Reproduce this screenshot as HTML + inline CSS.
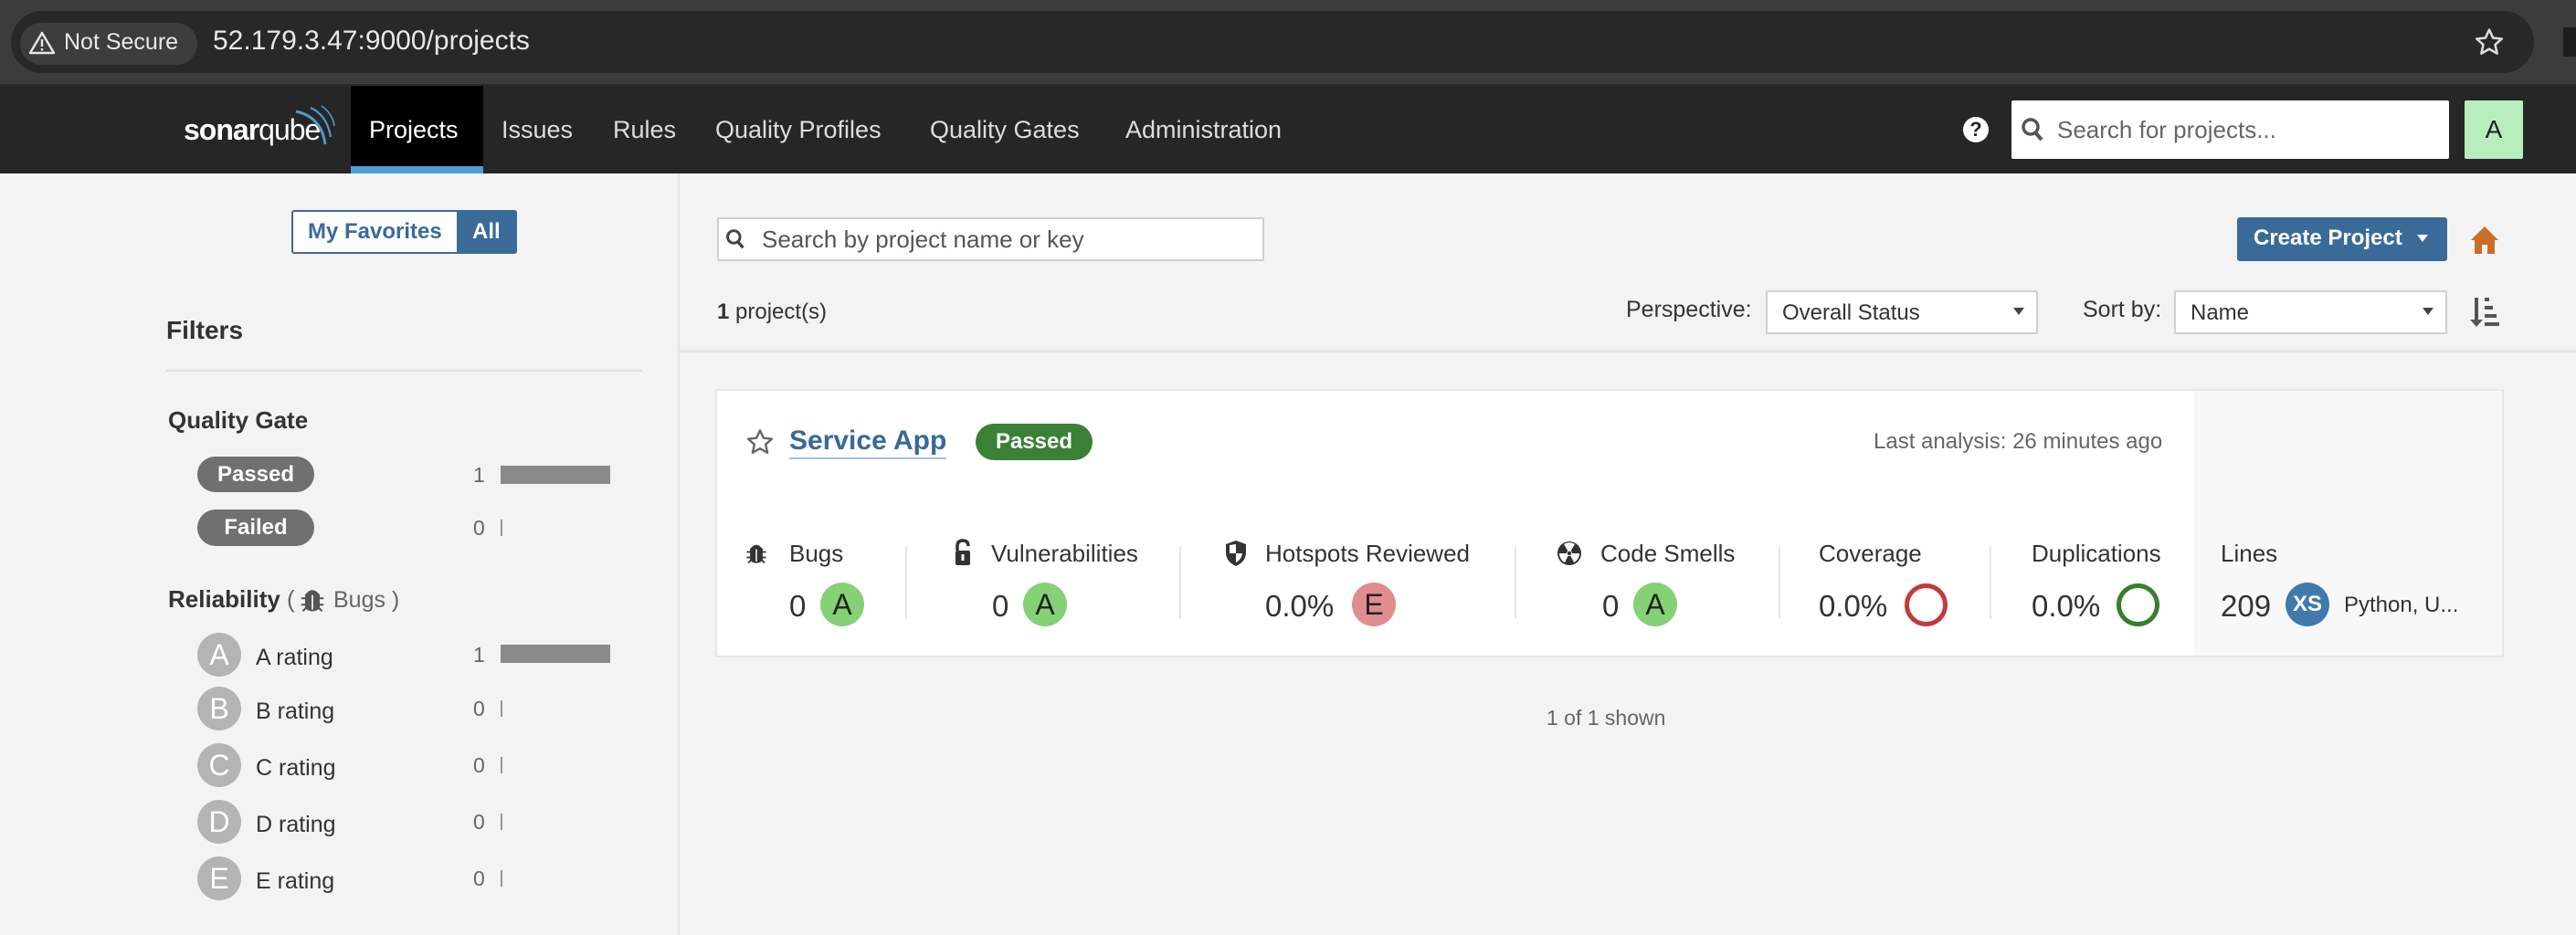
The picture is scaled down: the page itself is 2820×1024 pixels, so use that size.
<!DOCTYPE html>
<html><head><meta charset="utf-8"><style>
*{margin:0;padding:0;box-sizing:border-box}
body{width:2820px;height:1024px;overflow:hidden;background:#f3f3f3;font-family:"Liberation Sans",Arial,sans-serif;position:relative;color:#333}
.a{position:absolute}
.t{position:absolute;white-space:nowrap;line-height:1}
.nav{font-size:27px;color:#ddd}
.rc{position:absolute;width:48px;height:48px;border-radius:50%;background:#b4b4b4;color:#fff;font-size:32px;text-align:center;line-height:48px}
.lbl{font-size:25px;color:#333}
.cnt{font-size:23px;color:#666}
.ml{font-size:26px;color:#333}
.mv{font-size:33px;color:#333}
.rg{position:absolute;width:48px;height:48px;border-radius:50%;font-size:32px;text-align:center;line-height:48px;color:#222;top:638px}
.div{position:absolute;top:598px;width:2px;height:80px;background:#e6e6e6}
</style></head><body>
<!-- browser bar -->
<div class="a" style="left:0;top:0;width:2820px;height:92px;background:#3c3c3c"></div>
<div class="a" style="left:0;top:92px;width:2820px;height:2px;background:#2a2a2a"></div>
<div class="a" style="left:12px;top:12px;width:2762px;height:68px;border-radius:34px;background:#282828"></div>
<div class="a" style="left:22px;top:25px;width:194px;height:46px;border-radius:23px;background:#3d3d3d"></div>
<svg class="a" style="left:31px;top:33px" width="30" height="28" viewBox="0 0 30 28"><path d="M15 3 L28 25 H2 Z" fill="none" stroke="#e8e8e8" stroke-width="2.4" stroke-linejoin="round"/><rect x="13.8" y="10" width="2.4" height="8" fill="#e8e8e8"/><rect x="13.8" y="20" width="2.4" height="2.4" fill="#e8e8e8"/></svg>
<div class="t" style="left:70px;top:34px;font-size:25px;color:#e8e8e8">Not Secure</div>
<div class="t" style="left:233px;top:30px;font-size:30px;color:#e8e8e8">52.179.3.47:9000/projects</div>
<svg class="a" style="left:2708px;top:29px" width="34" height="34" viewBox="0 0 24 24"><path d="M12 2.5l2.9 6.3 6.8.7-5.1 4.6 1.5 6.8L12 17.4 5.9 20.9l1.5-6.8-5.1-4.6 6.8-.7z" fill="none" stroke="#ddd" stroke-width="1.8" stroke-linejoin="round"/></svg>
<div class="a" style="left:2806px;top:30px;width:14px;height:32px;background:#1d1d1d"></div>
<!-- nav -->
<div class="a" style="left:0;top:94px;width:2820px;height:96px;background:#262626"></div>
<div class="t" style="left:201px;top:126px;font-size:32px;color:#fff;letter-spacing:-1px"><b>sonar</b>qube</div>
<svg class="a" style="left:322px;top:114px" width="46" height="46" viewBox="0 0 46 46"><path d="M2 8 Q30 14 34 44" fill="none" stroke="#4e9bcd" stroke-width="3"/><path d="M18 4 Q36 12 40 36" fill="none" stroke="#4e9bcd" stroke-width="2.2"/><path d="M30 2 Q42 10 44 24" fill="none" stroke="#4e9bcd" stroke-width="1.6"/></svg>
<div class="a" style="left:384px;top:94px;width:145px;height:96px;background:#000"></div>
<div class="a" style="left:384px;top:182px;width:145px;height:8px;background:#4b9fd5"></div>
<div class="t nav" style="left:404px;top:129px;color:#fff">Projects</div>
<div class="t nav" style="left:549px;top:129px">Issues</div>
<div class="t nav" style="left:671px;top:129px">Rules</div>
<div class="t nav" style="left:783px;top:129px">Quality Profiles</div>
<div class="t nav" style="left:1018px;top:129px">Quality Gates</div>
<div class="t nav" style="left:1232px;top:129px">Administration</div>
<div class="a" style="left:2149px;top:128px;width:28px;height:28px;border-radius:50%;background:#fff;color:#262626;font-size:22px;font-weight:bold;text-align:center;line-height:28px">?</div>
<div class="a" style="left:2202px;top:110px;width:479px;height:64px;background:#fff;border-radius:2px"></div>
<svg class="a" style="left:2212px;top:128px" width="26" height="28" viewBox="0 0 26 28"><circle cx="11" cy="11" r="8" fill="none" stroke="#555" stroke-width="3.5"/><path d="M16 17 L23 25" stroke="#555" stroke-width="4"/></svg>
<div class="t" style="left:2252px;top:129px;font-size:26px;color:#666">Search for projects...</div>
<div class="a" style="left:2698px;top:110px;width:64px;height:64px;background:#b8eebe;border-radius:2px;font-size:28px;color:#222;text-align:center;line-height:64px">A</div>
<!-- sidebar -->
<div class="a" style="left:742px;top:190px;width:2px;height:834px;background:#e6e6e6"></div>
<div class="a" style="left:319px;top:230px;width:247px;height:48px;border:2px solid #3a6b98;border-radius:3px;background:#fff"></div>
<div class="a" style="left:500px;top:230px;width:66px;height:48px;background:#3a6b98;border-radius:0 3px 3px 0"></div>
<div class="t" style="left:337px;top:242px;font-size:24px;color:#3a6b98;font-weight:bold">My Favorites</div>
<div class="t" style="left:517px;top:242px;font-size:24px;color:#fff;font-weight:bold">All</div>
<div class="t" style="left:182px;top:348px;font-size:28px;font-weight:bold;color:#333">Filters</div>
<div class="a" style="left:182px;top:405px;width:521px;height:2px;background:#e1e1e1"></div>
<div class="t" style="left:184px;top:447px;font-size:26px;font-weight:bold;color:#333">Quality Gate</div>
<div class="a" style="left:216px;top:500px;width:128px;height:39px;border-radius:20px;background:#707070;color:#fff;font-size:24px;font-weight:bold;text-align:center;line-height:39px">Passed</div>
<div class="a" style="left:216px;top:558px;width:128px;height:40px;border-radius:20px;background:#707070;color:#fff;font-size:24px;font-weight:bold;text-align:center;line-height:40px">Failed</div>
<div class="t cnt" style="left:518px;top:509px">1</div>
<div class="a" style="left:548px;top:510px;width:120px;height:20px;background:#8a8a8a"></div>
<div class="t cnt" style="left:518px;top:567px">0</div>
<div class="a" style="left:548px;top:569px;width:2px;height:18px;background:#999"></div>
<div class="t" style="left:184px;top:643px;font-size:26px;font-weight:bold;color:#333">Reliability <span style="font-weight:normal;color:#666">(</span></div>
<svg class="a" style="left:328px;top:642px" width="28" height="30" viewBox="0 0 16 16"><path d="M5 4 Q8 1 11 4 Z M4 5 H12 V13 Q8 16 4 13 Z M1 7 H4 M12 7 H15 M1 11 H4 M12 11 H15 M2 15 L4 13 M14 15 L12 13" fill="#555" stroke="#555" stroke-width="1.2"/><path d="M8 5 V14" stroke="#f3f3f3" stroke-width="1"/></svg>
<div class="t" style="left:365px;top:645px;font-size:25px;color:#666">Bugs )</div>
<div class="rc" style="left:216px;top:693px">A</div><div class="t lbl" style="left:280px;top:708px">A rating</div><div class="t cnt" style="left:518px;top:706px">1</div><div class="a" style="left:548px;top:706px;width:120px;height:20px;background:#8a8a8a"></div>
<div class="rc" style="left:216px;top:752px">B</div><div class="t lbl" style="left:280px;top:767px">B rating</div><div class="t cnt" style="left:518px;top:765px">0</div><div class="a" style="left:548px;top:767px;width:2px;height:18px;background:#999"></div>
<div class="rc" style="left:216px;top:814px">C</div><div class="t lbl" style="left:280px;top:829px">C rating</div><div class="t cnt" style="left:518px;top:827px">0</div><div class="a" style="left:548px;top:829px;width:2px;height:18px;background:#999"></div>
<div class="rc" style="left:216px;top:876px">D</div><div class="t lbl" style="left:280px;top:891px">D rating</div><div class="t cnt" style="left:518px;top:889px">0</div><div class="a" style="left:548px;top:891px;width:2px;height:18px;background:#999"></div>
<div class="rc" style="left:216px;top:938px">E</div><div class="t lbl" style="left:280px;top:953px">E rating</div><div class="t cnt" style="left:518px;top:951px">0</div><div class="a" style="left:548px;top:953px;width:2px;height:18px;background:#999"></div>
<!-- main top -->
<div class="a" style="left:785px;top:238px;width:599px;height:48px;background:#fff;border:2px solid #cfcfcf;border-radius:2px"></div>
<svg class="a" style="left:794px;top:249px" width="22" height="26" viewBox="0 0 26 28"><circle cx="11" cy="11" r="8" fill="none" stroke="#444" stroke-width="3.5"/><path d="M16 17 L23 25" stroke="#444" stroke-width="4"/></svg>
<div class="t" style="left:834px;top:249px;font-size:26px;color:#555">Search by project name or key</div>
<div class="a" style="left:2449px;top:238px;width:230px;height:48px;background:#3a6b98;border-radius:3px"></div>
<div class="t" style="left:2467px;top:249px;font-size:24px;color:#fff;font-weight:bold">Create Project</div>
<svg class="a" style="left:2645px;top:256px" width="14" height="10" viewBox="0 0 14 10"><path d="M1 1 H13 L7 9 Z" fill="#fff"/></svg>
<svg class="a" style="left:2704px;top:247px" width="32" height="32" viewBox="0 0 32 32"><path d="M16 1 L31 16 H27 V31 H19 V21 H13 V31 H5 V16 H1 Z" fill="#cb6d2a"/></svg>
<div class="t" style="left:785px;top:330px;font-size:24px;color:#333"><b>1</b> project(s)</div>
<div class="t" style="left:1780px;top:327px;font-size:25px;color:#333">Perspective:</div>
<div class="a" style="left:1933px;top:318px;width:298px;height:48px;background:#fff;border:2px solid #d0d0d0;border-radius:2px"></div>
<div class="t" style="left:1951px;top:331px;font-size:24px;color:#333">Overall Status</div>
<svg class="a" style="left:2204px;top:336px" width="12" height="10" viewBox="0 0 12 10"><path d="M0 1 H12 L6 9 Z" fill="#444"/></svg>
<div class="t" style="left:2280px;top:327px;font-size:25px;color:#333">Sort by:</div>
<div class="a" style="left:2380px;top:318px;width:299px;height:48px;background:#fff;border:2px solid #d0d0d0;border-radius:2px"></div>
<div class="t" style="left:2398px;top:331px;font-size:24px;color:#333">Name</div>
<svg class="a" style="left:2652px;top:336px" width="12" height="10" viewBox="0 0 12 10"><path d="M0 1 H12 L6 9 Z" fill="#444"/></svg>
<svg class="a" style="left:2704px;top:325px" width="32" height="34" viewBox="0 0 32 34"><rect x="5" y="1" width="4" height="26" fill="#555"/><path d="M0 25 H14 L7 33 Z" fill="#555"/><rect x="16" y="1" width="5" height="4" fill="#555"/><rect x="16" y="10" width="9" height="4" fill="#555"/><rect x="16" y="19" width="13" height="4" fill="#555"/><rect x="16" y="28" width="16" height="4" fill="#555"/></svg>
<div class="a" style="left:744px;top:383px;width:2076px;height:3px;background:#e6e6e6"></div>
<!-- card -->
<div class="a" style="left:783px;top:426px;width:1958px;height:294px;background:#fff;border:2px solid #e6e6e6"></div>
<div class="a" style="left:2402px;top:428px;width:337px;height:290px;background:#f8f8f8"></div>
<svg class="a" style="left:815px;top:468px" width="34" height="32" viewBox="0 0 24 24"><path d="M12 2.5l2.9 6.3 6.8.7-5.1 4.6 1.5 6.8L12 17.4 5.9 20.9l1.5-6.8-5.1-4.6 6.8-.7z" fill="none" stroke="#666" stroke-width="1.8" stroke-linejoin="round"/></svg>
<div class="t" style="left:864px;top:468px;font-size:30px;font-weight:bold;color:#376a98">Service App</div>
<div class="a" style="left:864px;top:501px;width:172px;height:2px;background:#a9bed2"></div>
<div class="a" style="left:1068px;top:464px;width:128px;height:40px;border-radius:20px;background:#3a8135;color:#fff;font-size:24px;font-weight:bold;text-align:center;line-height:40px">Passed</div>
<div class="t" style="left:2051px;top:472px;font-size:24px;color:#666">Last analysis: 26 minutes ago</div>
<!-- metrics -->
<svg class="a" style="left:816px;top:592px" width="24" height="28" viewBox="0 0 16 16"><path d="M5 4 Q8 1 11 4 Z M4 5 H12 V13 Q8 16 4 13 Z M1 7 H4 M12 7 H15 M1 11 H4 M12 11 H15 M2 15 L4 13 M14 15 L12 13" fill="#333" stroke="#333" stroke-width="1.2"/><path d="M8 5 V14" stroke="#fff" stroke-width="1"/></svg>
<div class="t ml" style="left:864px;top:593px">Bugs</div>
<div class="t mv" style="left:864px;top:647px">0</div>
<div class="rg" style="left:898px;background:#85d176">A</div>
<div class="div" style="left:991px"></div>
<svg class="a" style="left:1044px;top:590px" width="20" height="30" viewBox="0 0 20 30"><path d="M4 13 V8 Q4 2 10 2 Q16 2 16 8" fill="none" stroke="#333" stroke-width="3.5"/><rect x="2" y="13" width="16" height="16" rx="2" fill="#333"/><rect x="8.5" y="17" width="3" height="7" fill="#fff"/></svg>
<div class="t ml" style="left:1085px;top:593px">Vulnerabilities</div>
<div class="t mv" style="left:1086px;top:647px">0</div>
<div class="rg" style="left:1120px;background:#85d176">A</div>
<div class="div" style="left:1291px"></div>
<svg class="a" style="left:1340px;top:591px" width="26" height="30" viewBox="0 0 26 30"><path d="M13 1 L24 5 V14 Q24 24 13 29 Q2 24 2 14 V5 Z" fill="#333"/><path d="M13 5 V15 H6 V6 Z M13 15 H20 Q19 22 13 25 Z" fill="#fff"/></svg>
<div class="t ml" style="left:1385px;top:593px">Hotspots Reviewed</div>
<div class="t mv" style="left:1385px;top:647px">0.0%</div>
<div class="rg" style="left:1480px;background:#e18c8e">E</div>
<div class="div" style="left:1658px"></div>
<svg class="a" style="left:1704px;top:592px" width="28" height="28" viewBox="0 0 28 28"><circle cx="14" cy="14" r="13" fill="#333"/><circle cx="14" cy="14" r="3" fill="#fff"/><path d="M14 14 L8 4 A11 11 0 0 1 20 4 Z M14 14 L25 14 A11 11 0 0 1 19 24 Z M14 14 L9 24 A11 11 0 0 1 3 14 Z" fill="#fff" transform="rotate(0 14 14)"/><circle cx="14" cy="14" r="2.2" fill="#333"/></svg>
<div class="t ml" style="left:1752px;top:593px">Code Smells</div>
<div class="t mv" style="left:1754px;top:647px">0</div>
<div class="rg" style="left:1788px;background:#85d176">A</div>
<div class="div" style="left:1947px"></div>
<div class="t ml" style="left:1991px;top:593px">Coverage</div>
<div class="t mv" style="left:1991px;top:647px">0.0%</div>
<div class="a" style="left:2085px;top:639px;width:47px;height:47px;border-radius:50%;border:5px solid #c23b3d"></div>
<div class="div" style="left:2178px"></div>
<div class="t ml" style="left:2224px;top:593px">Duplications</div>
<div class="t mv" style="left:2224px;top:647px">0.0%</div>
<div class="a" style="left:2317px;top:639px;width:47px;height:47px;border-radius:50%;border:5px solid #367f2f"></div>
<div class="t ml" style="left:2431px;top:593px">Lines</div>
<div class="t mv" style="left:2431px;top:647px">209</div>
<div class="rg" style="left:2502px;background:#4279ad;color:#fff;font-size:24px;font-weight:bold">XS</div>
<div class="t" style="left:2566px;top:651px;font-size:24px;color:#333">Python, U...</div>
<div class="t" style="left:1693px;top:775px;font-size:23px;color:#666">1 of 1 shown</div>
</body></html>
